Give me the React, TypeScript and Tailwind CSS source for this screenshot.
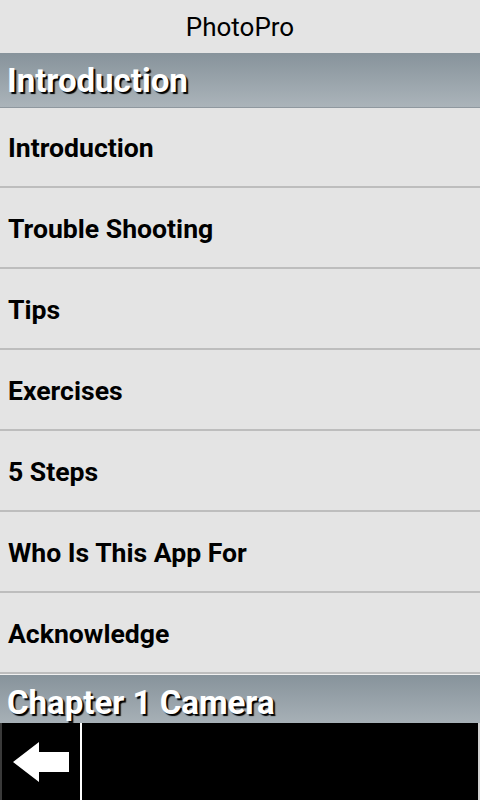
import { useState } from "react";

const sections = [
  {
    title: "Introduction",
    items: [
      "Introduction",
      "Trouble Shooting",
      "Tips",
      "Exercises",
      "5 Steps",
      "Who Is This App For",
      "Acknowledge",
    ],
  },
  {
    title: "Chapter 1 Camera",
    items: [],
  },
];

function SectionHeader({ title }: { title: string }) {
  return (
    <div className="h-[55px] shrink-0 flex items-center px-[7px] bg-linear-to-b from-[#87939b] to-[#abb4ba] border-b border-[#8f989f]">
      <span className="text-[33px] font-bold text-white [text-shadow:2px_2px_1px_#000] leading-none">
        {title}
      </span>
    </div>
  );
}

export default function App() {
  const [selected, setSelected] = useState<string | null>(null);

  return (
    <div className="w-[480px] h-[800px] flex flex-col bg-[#e4e4e4] font-['Roboto',sans-serif] overflow-hidden">
      <div className="h-[53px] shrink-0 flex items-center justify-center pt-[2px] text-[26px] text-black">
        PhotoPro
      </div>

      <div className="flex-1 overflow-hidden">
        {sections.map((section) => (
          <div key={section.title}>
            <SectionHeader title={section.title} />
            {section.items.map((item, i) => (
              <button
                key={item}
                type="button"
                onClick={() => setSelected(item)}
                className={
                  "w-full flex items-center px-[8px] pt-[2px] text-left text-[26.6px] font-bold text-black border-b-2 border-[#bdbdbd] " +
                  (i === 0 ? "h-[80px] " : "h-[81px] ") +
                  (selected === item ? "bg-[#d4d4d4]" : "bg-[#e4e4e4]")
                }
              >
                {item}
              </button>
            ))}
            {section.items.length > 0 && <div className="h-px bg-[#f0f0f0]" />}
          </div>
        ))}
      </div>

      <div className="h-[77px] shrink-0 flex bg-black border-l-2 border-[#3a3a3a] border-r-2 border-r-[#d0d0d0]">
        <button type="button" className="w-[78px] h-full flex items-center justify-start">
          <svg width="78" height="77" viewBox="0 0 78 77">
            <polygon points="11,39 37,19 37,29 67,29 67,49 37,49 37,59" fill="#fff" />
          </svg>
        </button>
        <div className="w-[2px] h-full bg-white" />
        <div className="flex-1" />
      </div>
    </div>
  );
}
